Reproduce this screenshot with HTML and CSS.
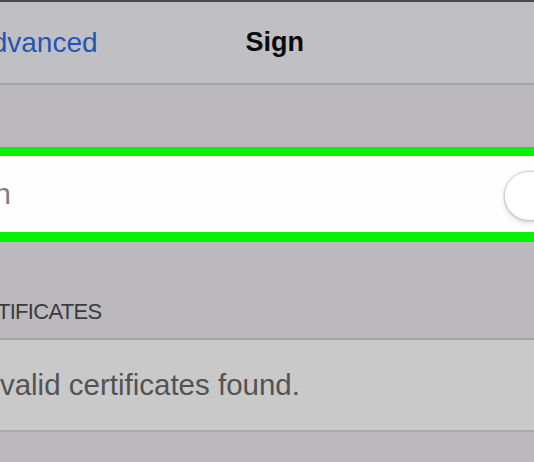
FILE: index.html
```html
<!DOCTYPE html>
<html lang="en">
<head>
<meta charset="utf-8">
<title>Sign</title>
<link rel="stylesheet" href="styles.css">
</head>
<body>
<div class="screen">
  <div class="status-edge"></div>
  <header class="nav">
    <span class="back">Advanced</span>
    <h1 class="title">Sign</h1>
  </header>
  <div class="gap"></div>
  <div class="highlight">
    <div class="row">
      <span class="label">Sign</span>
      <span class="switch"><span class="knob"></span></span>
    </div>
  </div>
  <div class="section-header"><span class="header-text">CERTIFICATES</span></div>
  <div class="cell"><span class="cell-text">No valid certificates found.</span></div>
  <div class="tail"></div>
</div>
</body>
</html>
```
FILE: styles.css
```css
* { box-sizing: border-box; }
html, body {
  margin: 0;
  padding: 0;
  background: #bbb9be;
  overflow: hidden;
}
body {
  font-family: "Liberation Sans", Arial, sans-serif;
}
.screen {
  width: 534px;
  height: 462px;
  overflow: hidden;
  display: flex;
  flex-direction: column;
}
.status-edge {
  height: 2px;
  background: #4a4a4c;
  flex: none;
}
.nav {
  height: 83px;
  flex: none;
  background: #c0bfc4;
  border-bottom: 2px solid #a4a3a7;
  display: flex;
  align-items: center;
  white-space: nowrap;
}
.back {
  font-size: 28px;
  color: #1f57b3;
  margin-left: -27px;
}
.title {
  margin: 0 0 0 148px;
  font-size: 27px;
  font-weight: 700;
  color: #0b0b0c;
}
.gap {
  height: 62px;
  flex: none;
}
.highlight {
  flex: none;
  border-top: 9px solid #06f206;
  border-bottom: 10px solid #06f206;
}
.row {
  height: 76px;
  background: #fefefe;
  display: flex;
  align-items: center;
  justify-content: space-between;
  white-space: nowrap;
}
.label {
  font-size: 30px;
  color: #7e7e80;
  margin-left: -49px;
}
.switch {
  width: 86px;
  height: 52px;
  border-radius: 26px;
  background: #ffffff;
  box-shadow: inset 0 0 0 2px #ebebee;
  padding: 2px;
  display: flex;
  margin-right: -55px;
  margin-top: 4px;
}
.knob {
  width: 48px;
  height: 48px;
  border-radius: 50%;
  background: #ffffff;
  box-shadow: 0 3px 6px rgba(0,0,0,0.14), 0 0 0 1px rgba(0,0,0,0.06);
}
.section-header {
  height: 98px;
  flex: none;
  display: flex;
  align-items: flex-end;
  padding-bottom: 15px;
  border-bottom: 2px solid #a8a7ab;
  white-space: nowrap;
}
.header-text {
  font-size: 22px;
  line-height: 22px;
  color: #3b3b3d;
  margin-left: -47px;
  letter-spacing: -0.7px;
}
.cell {
  height: 92px;
  flex: none;
  background: #c9c9ca;
  border-bottom: 2px solid #a9a9ab;
  display: flex;
  align-items: center;
  white-space: nowrap;
}
.cell-text {
  font-size: 29.5px;
  color: #535355;
  margin-left: -46px;
}
.tail {
  flex: 1;
}
```
